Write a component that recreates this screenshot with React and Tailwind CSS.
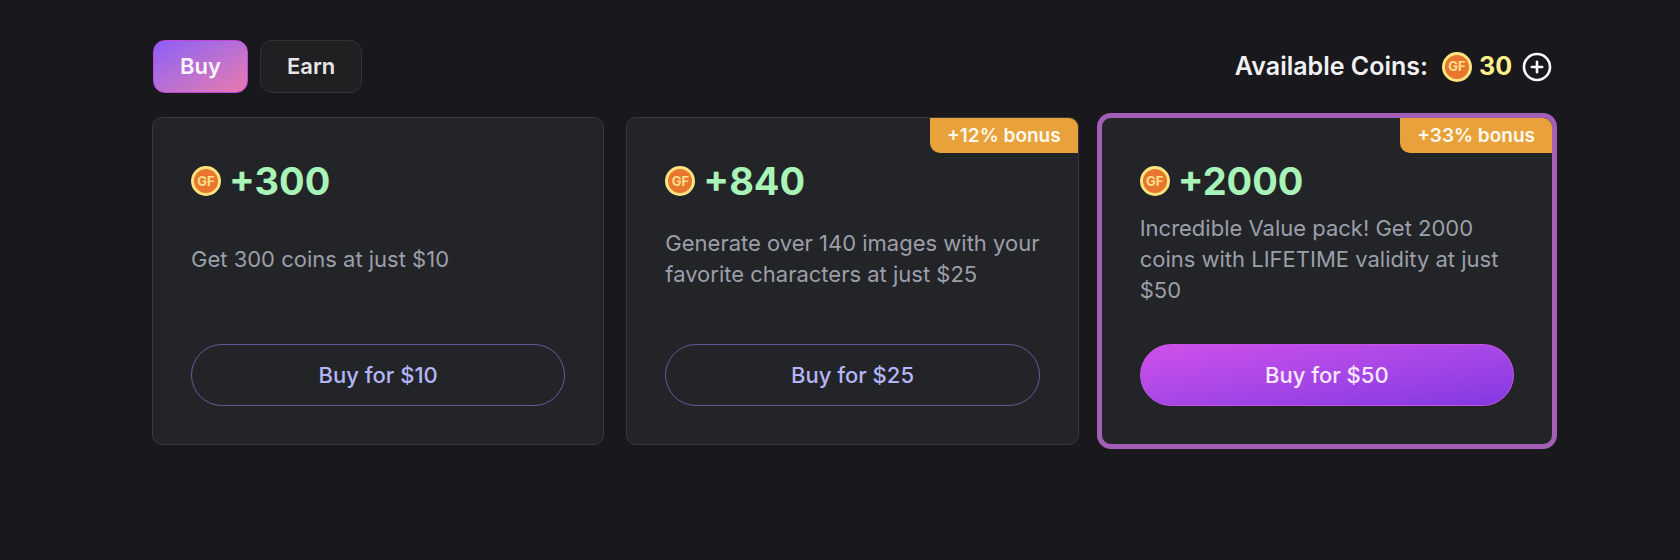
import React, { useState } from 'react';
import clsx from 'clsx';

const PACKS = [
    { amount: 300, price: 10, text: 'Get 300 coins at just $10' },
    { amount: 840, price: 25, bonus: '+12% bonus', text: 'Generate over 140 images with your favorite characters at just $25' },
    { amount: 2000, price: 50, bonus: '+33% bonus', featured: true, text: 'Incredible Value pack! Get 2000 coins with LIFETIME validity at just $50' },
];

const Coin = () => (
    <span className="flex size-[30px] shrink-0 items-center justify-center rounded-full border-3 border-[#fde47f] bg-[#e9762f] text-[13px] leading-none font-bold text-[#fde08a]">
        GF
    </span>
);

const Tab = ({ active, onClick, children }) => (
    <button
        type="button"
        onClick={onClick}
        className={clsx(
            'h-[53px] rounded-xl border px-[26px] text-[22px] font-semibold',
            active
                ? 'border-[#c146dc] bg-linear-to-br from-[#8b5cf6] to-[#ea78ac] text-[#f8f4fd]'
                : 'border-[#333336] bg-[#202022] text-[#e6e6e8]'
        )}
    >
        {children}
    </button>
);

const PackCard = ({ amount, price, bonus, text, featured }) => (
    <article
        className={clsx(
            'relative flex flex-col rounded-[10px] border bg-[#232428] p-[38px]',
            featured ? 'border-[#a35fb6] ring-4 ring-[#a35fb6]' : 'border-[#37383c]'
        )}
    >
        {bonus && (
            <span className="absolute top-0 right-0 rounded-tr-[9px] rounded-bl-[10px] bg-[#e9a23b] px-[17px] text-[19px] leading-[35px] font-semibold text-[#fffaf0]">
                {bonus}
            </span>
        )}
        <h2 className="flex items-center gap-2 text-[38px] leading-[50px] font-bold text-[#a7f3b8]">
            <Coin />
            +{amount}
        </h2>
        <div className="-mr-2 mt-[6px] flex min-h-[94px] items-center">
            <p className="text-[22px] leading-[31px] text-[#9c9fa9]">{text}</p>
        </div>
        <button
            type="button"
            className={clsx(
                'mt-[38px] h-[62px] w-full rounded-full border text-[22px] font-medium',
                featured
                    ? 'border-[#c653e6] bg-linear-to-br from-[#cf50ea] to-[#8238e2] text-[#fae8ff]'
                    : 'border-[#5f5c98] text-[#b3b5f8]'
            )}
        >
            Buy for ${price}
        </button>
    </article>
);

export default function App() {
    const [tab, setTab] = useState('buy');

    return (
        <main className="min-h-screen bg-[#19181c] pt-10 pr-[127px] pb-10 pl-[152px] font-['Inter',sans-serif]">
            <header className="mb-6 flex items-center justify-between px-px">
                <div className="flex gap-3">
                    <Tab active={tab === 'buy'} onClick={() => setTab('buy')}>Buy</Tab>
                    <Tab active={tab === 'earn'} onClick={() => setTab('earn')}>Earn</Tab>
                </div>
                <div className="flex items-center text-[25px] font-semibold text-[#f1f1f4]">
                    <span className="mr-3.5">Available Coins:</span>
                    <Coin />
                    <span className="ml-[7px] font-bold text-[#fef08a]">30</span>
                    <button type="button" aria-label="Add coins" className="ml-2.5">
                        <svg className="size-[30px]" viewBox="0 0 30 30" fill="none" stroke="#fafafa" strokeWidth="2.6" strokeLinecap="round">
                            <circle cx="15" cy="15" r="13" />
                            <path d="M9.8 15h10.4M15 9.8v10.4" />
                        </svg>
                    </button>
                </div>
            </header>
            <section className="grid grid-cols-3 gap-[22px]">
                {PACKS.map((pack) => (
                    <PackCard key={pack.amount} {...pack} />
                ))}
            </section>
        </main>
    );
}
